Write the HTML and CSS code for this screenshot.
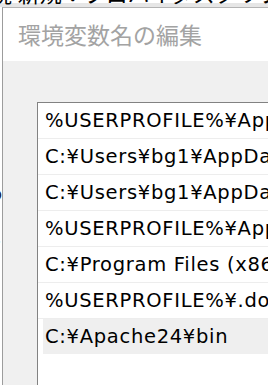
FILE: index.html
```html
<!DOCTYPE html>
<html lang="ja">
<head>
<meta charset="utf-8">
<link rel="stylesheet" href="styles.css">
</head>
<body>
<div class="desktop">
  <div class="bg-window">
    <div class="bg-top">境 新規：プロバイダスクリプト</div>
    <div class="bg-frag bg-frag1">つ</div>
    <div class="bg-frag bg-frag2">ト</div>
  </div>
  <div class="dialog">
    <div class="titlebar">環境変数名の編集</div>
    <div class="client">
      <div class="listbox">
        <div class="row"><span class="cell">%USERPROFILE%¥AppData¥Local¥Microsoft¥WindowsApps</span></div>
        <div class="row"><span class="cell">C:¥Users¥bg1¥AppData¥Local¥Programs</span></div>
        <div class="row"><span class="cell">C:¥Users¥bg1¥AppData¥Roaming¥npm</span></div>
        <div class="row"><span class="cell">%USERPROFILE%¥AppData¥Local¥Programs</span></div>
        <div class="row"><span class="cell">C:¥Program Files (x86)¥Common Files</span></div>
        <div class="row"><span class="cell">%USERPROFILE%¥.dotnet¥tools</span></div>
        <div class="row selected"><span class="cell">C:¥Apache24¥bin</span></div>
      </div>
    </div>
  </div>
</div>
</body>
</html>
```
FILE: styles.css
```css
html, body {
  margin: 0;
  padding: 0;
  background: #ffffff;
  overflow: hidden;
}
.desktop {
  position: relative;
  width: 268px;
  height: 385px;
  overflow: hidden;
  font-family: "Noto Sans", "Noto Sans CJK JP", sans-serif;
}
.bg-window {
  position: absolute;
  left: 0;
  top: 0;
  width: 268px;
  height: 385px;
}
.bg-top {
  position: absolute;
  left: -10px;
  top: -20px;
  white-space: nowrap;
  font-size: 22px;
  color: #000;
  background: linear-gradient(#fff 0 23px, #e6e6e6 23px);
  width: 300px;
  height: 27px;
  line-height: 27px;
}
.bg-frag {
  position: absolute;
  left: -17px;
  font-size: 20px;
  color: #1a2440;
}
.bg-frag1 { top: 180px; }
.bg-frag2 { top: 226px; }
.dialog {
  position: absolute;
  left: 2px;
  top: 7px;
  width: 320px;
  height: 420px;
  border-left: 1px solid #9c9c9c;
  border-top: 1px solid #b4b4b4;
  background: #f0f0f0;
  display: flex;
  flex-direction: column;
}
.titlebar {
  height: 53px;
  background: #ffffff;
  color: #a3a3a3;
  font-family: "Noto Sans CJK JP", sans-serif;
  font-size: 23px;
  line-height: 53px;
  padding-left: 15px;
  box-sizing: border-box;
  white-space: nowrap;
}
.client {
  flex: 1;
  background: #f0f0f0;
  padding: 41px 0 0 34px;
}
.listbox {
  background: #ffffff;
  border: 1px solid #828282;
  height: 400px;
  display: flex;
  flex-direction: column;
}
.row {
  height: 35px;
  border-bottom: 1px solid #ededed;
  display: flex;
  flex-shrink: 0;
}
.cell {
  margin-left: 5px;
  padding-left: 2px;
  flex: 1;
  font-family: "DejaVu Sans", "Noto Sans CJK JP", sans-serif;
  font-size: 19.5px;
  letter-spacing: 0.7px;
  line-height: 35px;
  color: #000;
  white-space: nowrap;
  overflow: hidden;
}
.row.selected {
  border-bottom-color: transparent;
}
.row.selected .cell {
  background: #efefef;
}
```
